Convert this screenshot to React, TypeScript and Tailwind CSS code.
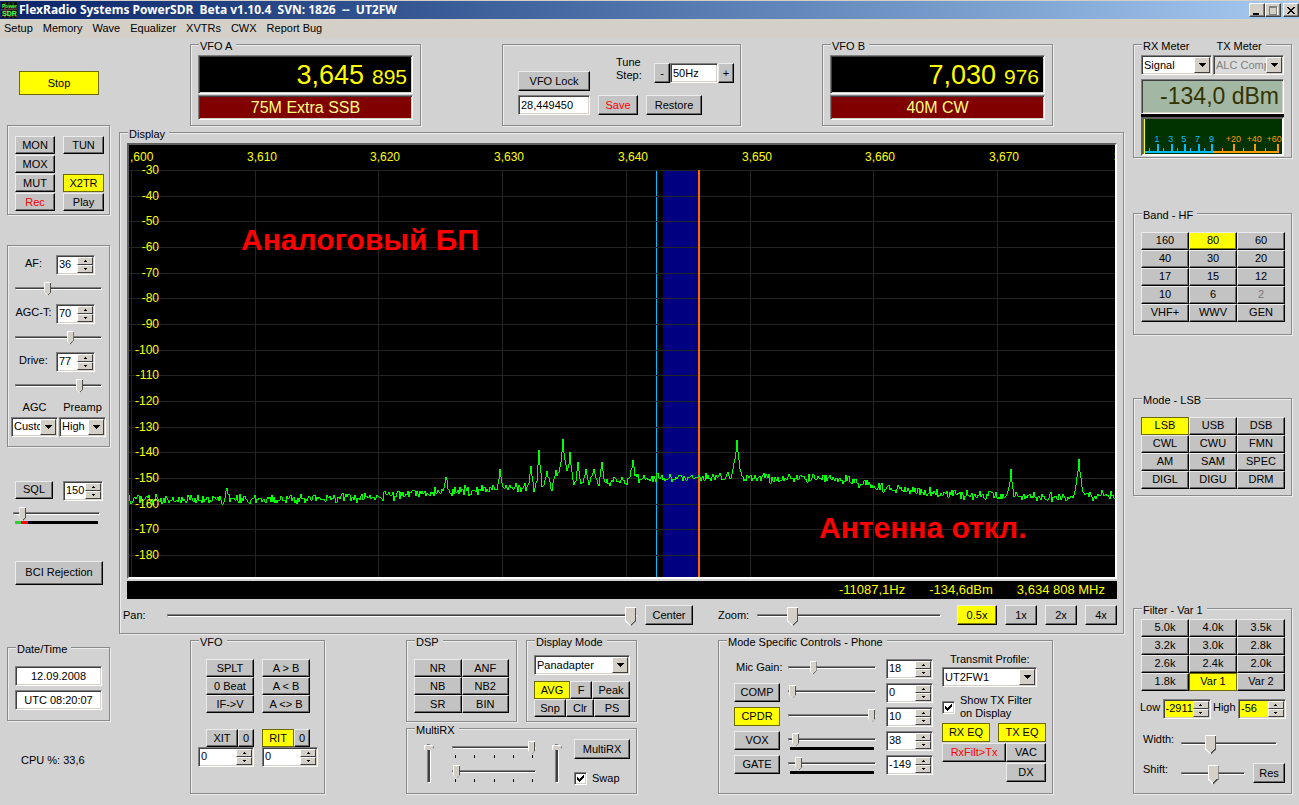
import React from 'react';
import clsx from 'clsx';

type GroupProps = {
  title?: React.ReactNode;
  className?: string;
  children: React.ReactNode;
};

function Group({ title, className, children }: GroupProps) {
  return (
    <fieldset
      className={clsx(
        'relative min-w-0 border border-[#8a8a8a] shadow-[inset_1px_1px_0_#ececec,1px_1px_0_#ececec]',
        className
      )}
    >
      {title && (
        <legend className="absolute -top-[5px] left-2 bg-[#d2d2d2] pl-px pr-1 leading-[13px] whitespace-nowrap">
          {title}
        </legend>
      )}
      {children}
    </fieldset>
  );
}

type BtnProps = {
  on?: boolean;
  raised?: boolean;
  className?: string;
  disabled?: boolean;
  children: React.ReactNode;
};

function Btn({ on, raised, className, disabled, children }: BtnProps) {
  return (
    <button
      type="button"
      disabled={disabled}
      className={clsx(
        'flex items-center justify-center overflow-hidden border whitespace-nowrap leading-none',
        on && !raised && 'border-[#6b6b00] bg-[#ffff00]',
        on && raised && 'border-t-[#ececec] border-l-[#ececec] border-r-black border-b-black bg-[#ffff00] shadow-[inset_-1px_-1px_0_#808000]',
        !on && 'border-t-[#ececec] border-l-[#ececec] border-r-black border-b-black bg-[#c3c3c3] shadow-[inset_-1px_-1px_0_#6a6a6a]',
        disabled && 'text-[#777]',
        className
      )}
    >
      {children}
    </button>
  );
}

const sunken =
  'border border-t-[#808080] border-l-[#808080] border-r-white border-b-white shadow-[inset_1px_1px_0_#404040,inset_-1px_-1px_0_#d4d0c8]';

function Spinner({ label, value, yellow, className }: { label: string; value: string; yellow?: boolean; className?: string }) {
  return (
    <div className={clsx(sunken, 'flex h-5 p-px', yellow ? 'bg-[#ffff00]' : 'bg-white', className)}>
      <input aria-label={label} defaultValue={value} className="h-full w-0 min-w-0 flex-1 bg-transparent pl-px pb-[2px] outline-none" />
      <div className="flex w-4 flex-col bg-[#d4d0c8]">
        <button
          type="button"
          aria-label={label + ' up'}
          className="flex flex-1 items-center justify-center border border-t-white border-l-white border-r-[#404040] border-b-[#404040]"
        >
          <svg width="3" height="2" viewBox="0 0 3 2" shapeRendering="crispEdges">
            <path d="M1 0h1v1h1v1H0V1h1z" />
          </svg>
        </button>
        <button
          type="button"
          aria-label={label + ' down'}
          className="flex flex-1 items-center justify-center border border-t-white border-l-white border-r-[#404040] border-b-[#404040]"
        >
          <svg width="3" height="2" viewBox="0 0 3 2" shapeRendering="crispEdges">
            <path d="M0 0h3v1H2v1H1V1H0z" />
          </svg>
        </button>
      </div>
    </div>
  );
}

function Combo({ id, label, value, muted, className }: { id?: string; label?: string; value: string; muted?: boolean; className?: string }) {
  return (
    <div className={clsx('relative h-5', className)}>
      <select
        id={id}
        aria-label={label}
        defaultValue={value}
        className={clsx(
          sunken,
          'h-full w-full appearance-none overflow-hidden rounded-none pr-4 pl-[2px] leading-none outline-none',
          muted ? 'bg-[#dcdcdc] text-[#808080]' : 'bg-white'
        )}
      >
        <option>{value}</option>
      </select>
      <span className="pointer-events-none absolute top-[2px] right-[2px] bottom-[2px] flex w-4 items-center justify-center border border-t-white border-l-white border-r-[#404040] border-b-[#404040] bg-[#d4d0c8]">
        <svg width="7" height="4" viewBox="0 0 7 4" shapeRendering="crispEdges">
          <path d="M0 0h7v1H6v1H5v1H4v1H3V3H2V2H1V1H0z" />
        </svg>
      </span>
    </div>
  );
}

const track =
  'block appearance-none bg-transparent [&::-webkit-slider-runnable-track]:box-border [&::-webkit-slider-runnable-track]:border [&::-webkit-slider-runnable-track]:border-t-[#808080] [&::-webkit-slider-runnable-track]:border-l-[#808080] [&::-webkit-slider-runnable-track]:border-r-white [&::-webkit-slider-runnable-track]:border-b-white [&::-webkit-slider-runnable-track]:bg-[#404040]';

const thumb =
  '[&::-webkit-slider-thumb]:appearance-none [&::-webkit-slider-thumb]:bg-[#d4d0c8] [&::-webkit-slider-thumb]:shadow-[inset_1px_1px_0_#fff,inset_-1px_0_0_#505050]';

// pointed lower end: light left edge, dark right edge
const tip =
  '[&::-webkit-slider-thumb]:[clip-path:polygon(0_0,100%_0,100%_72%,50%_100%,0_72%)] [&::-webkit-slider-thumb]:bg-[linear-gradient(to_bottom_right,transparent_30%,#505050_30%),linear-gradient(to_bottom_left,transparent_35%,#ffffff_35%)] [&::-webkit-slider-thumb]:bg-[size:50%_28%] [&::-webkit-slider-thumb]:bg-[position:right_bottom,left_bottom] [&::-webkit-slider-thumb]:bg-no-repeat';

function Slider({ label, value, big, className }: { label: string; value: number; big?: boolean; className?: string }) {
  return (
    <input
      type="range"
      aria-label={label}
      defaultValue={value}
      className={clsx(
        track,
        thumb,
        tip,
        '[&::-webkit-slider-runnable-track]:h-[3px]',
        big
          ? 'h-5 [&::-webkit-slider-thumb]:-mt-2 [&::-webkit-slider-thumb]:h-5 [&::-webkit-slider-thumb]:w-[11px]'
          : 'h-[14px] [&::-webkit-slider-thumb]:-mt-[6px] [&::-webkit-slider-thumb]:h-[14px] [&::-webkit-slider-thumb]:w-[7px]',
        className
      )}
    />
  );
}

function VSlider({ label }: { label: string }) {
  return (
    <input
      type="range"
      aria-label={label}
      defaultValue={100}
      className={clsx(
        track,
        thumb,
        'h-[39px] w-[10px] [direction:rtl] [writing-mode:vertical-lr] [&::-webkit-slider-runnable-track]:w-[4px] [&::-webkit-slider-thumb]:-ml-[4px] [&::-webkit-slider-thumb]:h-[5px] [&::-webkit-slider-thumb]:w-[10px] [&::-webkit-slider-thumb]:[clip-path:polygon(0_0,80%_0,100%_50%,80%_100%,0_100%)]'
      )}
    />
  );
}

function Ticks() {
  return (
    <div className="flex h-[3px] justify-between px-[3px]">
      {[0, 1, 2, 3, 4].map((t) => (
        <span key={t} className="w-px bg-black" />
      ))}
    </div>
  );
}

function Check({ label, className }: { label: React.ReactNode; className?: string }) {
  return (
    <label className={clsx('flex items-center gap-[5px] leading-[13px]', className)}>
      <span className="relative h-[13px] w-[13px]">
        <input type="checkbox" defaultChecked className={clsx(sunken, 'peer block h-[13px] w-[13px] appearance-none bg-white')} />
        <svg className="pointer-events-none absolute top-[3px] left-[3px] hidden peer-checked:block" width="7" height="7" viewBox="0 0 7 7" shapeRendering="crispEdges">
          <path d="M0 2h1v1h1v1h1V3h1V2h1V1h1V0h1v3H6v1H5v1H4v1H3v1H2V6H1V5H0z" />
        </svg>
      </span>
      <span>{label}</span>
    </label>
  );
}

function Vfo({ name, mhz, hz, band }: { name: string; mhz: string; hz: string; band: string }) {
  return (
    <Group title={name} className="w-[231px] px-[7px] pt-[10px] pb-[5px]">
      <div className={clsx(sunken, 'flex h-[39px] items-baseline justify-end gap-2 bg-black px-[5px] text-[#ffff00]')}>
        <span className="text-[27px] leading-[38px]">{mhz}</span>
        <span className="text-[21px]">{hz}</span>
      </div>
      <div className={clsx(sunken, 'mt-px flex h-[25px] items-center justify-center bg-[#800000] text-[16px] text-[#ffff80]')}>{band}</div>
    </Group>
  );
}

function ButtonGrid({ items, active, raised, off }: { items: string[]; active: string; raised?: boolean; off?: string }) {
  return (
    <div className="grid grid-cols-3">
      {items.map((item) => (
        <Btn key={item} on={item === active} raised={raised} disabled={item === off} className="h-[18px]">
          {item}
        </Btn>
      ))}
    </div>
  );
}

// noise floor and carriers, [x, y] inside the panadapter
const floor = [
  [0, 355], [110, 355], [170, 354], [230, 352], [270, 350], [320, 346], [370, 344], [400, 342], [430, 340], [470, 338],
  [500, 335], [530, 333], [600, 332], [650, 334], [710, 333], [740, 341], [770, 345], [820, 349], [870, 350], [920, 352], [986, 350],
];
const peaks = [
  [98, 343, 2], [317, 332, 3], [371, 324, 2], [402, 321, 2], [410, 305, 2], [418, 326, 3], [427, 325, 3], [434, 294, 5], [441, 307, 3],
  [449, 317, 2], [457, 324, 2], [465, 324, 3], [473, 317, 2], [504, 315, 3], [608, 295, 4], [882, 324, 2], [950, 314, 4],
];

function spectrum() {
  let seed = 1826;
  const pts: string[] = [];
  for (let x = 0; x <= 986; x++) {
    let i = 0;
    while (i < floor.length - 2 && x > floor[i + 1][0]) i++;
    const [x0, y0] = floor[i];
    const [x1, y1] = floor[i + 1];
    seed = (seed * 16807) % 2147483647;
    const n = seed / 2147483647 - 0.5;
    seed = (seed * 16807) % 2147483647;
    const m = seed / 2147483647 - 0.5;
    let y = y0 + ((y1 - y0) * (x - x0)) / (x1 - x0) + (n + m) * 6;
    peaks.forEach(([px, py, w]) => {
      const d = Math.abs(x - px) / (w + 1);
      if (d < 1) y = Math.min(y, py + (y - py) * Math.pow(d, 0.7));
    });
    pts.push(x + ',' + Math.round(y));
  }
  return pts.join(' ');
}

const gridX = [2, 126, 249, 373, 497, 621, 744, 868];
const gridY = [25, 51, 76, 102, 128, 153, 179, 205, 230, 256, 282, 307, 333, 359, 384, 410];
const freqs = ['3,610', '3,620', '3,630', '3,640', '3,650', '3,660', '3,670', '3,680'];

function Panadapter() {
  return (
    <svg className="block h-auto w-full" viewBox="0 0 986 432" shapeRendering="crispEdges">
      <rect width="986" height="432" fill="#000" />
      <rect x="527" y="26" width="1" height="406" fill="#00bfff" />
      <rect x="534" y="26" width="35" height="406" fill="#000080" />
      {gridX.map((x) => (
        <rect key={x} x={x} y="25" width="1" height="407" fill="#242424" />
      ))}
      {gridY.map((y) => (
        <rect key={y} x="0" y={y} width="986" height="1" fill="#242424" />
      ))}
      <rect x="569" y="25" width="2" height="407" fill="#ff6600" />
      <polyline points={spectrum()} fill="none" stroke="#00ff00" strokeWidth="1" />
      <g fill="#ffff00" fontSize="12">
        <text x="1" y="16">,600</text>
        {freqs.map((f, i) => (
          <text key={f} x={i === 7 ? 985 : gridX[i + 1] - 8} y="16">{f}</text>
        ))}
        {gridY.map((y, i) => (
          <text key={y} x="30" y={y + 4} textAnchor="end">{-30 - i * 10}</text>
        ))}
      </g>
      <g fill="#ff0000" fontWeight="bold" fontSize="30">
        <text x="112" y="105">Аналоговый БП</text>
        <text x="690" y="393">Антенна откл.</text>
      </g>
    </svg>
  );
}

function SMeter() {
  return (
    <svg className="block h-auto w-full" viewBox="0 0 140 35" shapeRendering="crispEdges">
      <rect width="140" height="35" fill="#003300" />
      <rect x="0" width="1" height="35" fill="#808000" />
      <rect x="1" width="1" height="35" fill="#ffff00" />
      <g fill="#00bfff">
        <rect x="2" y="32" width="68" height="2" />
        {[14, 28, 41, 55, 68].map((x) => <rect key={x} x={x} y="25" width="2" height="7" />)}
        {[6, 20, 34, 47, 61].map((x) => <rect key={x} x={x} y="29" width="1" height="3" />)}
      </g>
      <g fill="#ff9900">
        <rect x="70" y="32" width="67" height="2" />
        {[91, 112, 135].map((x) => <rect key={x} x={x} y="25" width="2" height="7" />)}
        {[80, 101, 123].map((x) => <rect key={x} x={x} y="29" width="1" height="3" />)}
      </g>
      <g fontSize="9" textAnchor="middle">
        <g fill="#00bfff">
          <text x="14" y="23">1</text>
          <text x="28" y="23">3</text>
          <text x="41" y="23">5</text>
          <text x="55" y="23">7</text>
          <text x="69" y="23">9</text>
        </g>
        <g fill="#ff9900">
          <text x="91" y="23">+20</text>
          <text x="112" y="23">+40</text>
          <text x="132" y="23">+60</text>
        </g>
      </g>
    </svg>
  );
}

function WinButton({ label, children, className }: { label: string; children: React.ReactNode; className?: string }) {
  return (
    <button
      type="button"
      aria-label={label}
      className={clsx(
        'flex h-[14px] w-4 items-center justify-center border border-t-white border-l-white border-r-[#404040] border-b-[#404040] bg-[#d4d0c8] shadow-[inset_-1px_-1px_0_#808080]',
        className
      )}
    >
      <svg width="10" height="9" viewBox="0 0 10 9" shapeRendering="crispEdges">
        {children}
      </svg>
    </button>
  );
}

function TitleBar() {
  return (
    <header className="flex h-[18px] items-center bg-linear-to-r from-[#0a246a] to-[#a6caf0] text-white">
      <svg width="16" height="16" viewBox="0 0 16 16" className="ml-px">
        <rect width="16" height="16" fill="#0a0f0a" />
        <path d="M0 7.500h16M8 0v16M12 0v16M4 0v16" stroke="#1c5c1c" strokeWidth="1" />
        <path d="M0 8h3l1-3 2 6 1-4h9M0 15l2-2 2 2 2-3 3 3 3-2 4 2" fill="none" stroke="#8a2848" strokeWidth="1" />
        <text x="1" y="6" fontSize="5" fontWeight="bold" fill="#4dff4d">Power</text>
        <text x="1" y="14" fontSize="7" fontWeight="bold" fill="#4dff4d">SDR</text>
      </svg>
      <h1 className="ml-[2px] font-['Noto_Sans',sans-serif] text-[12px] leading-[18px] font-bold whitespace-pre">
        {'FlexRadio Systems PowerSDR  Beta v1.10.4  SVN: 1826  --  UT2FW'}
      </h1>
      <div className="ml-auto flex text-black">
        <WinButton label="Minimize">
          <rect x="1" y="7" width="6" height="2" />
        </WinButton>
        <WinButton label="Maximize">
          <path d="M1 0h8v9H1zM2 2v6h6V2z" fill="#808080" fillRule="evenodd" />
          <path d="M9 1h1v8H9z" fill="#fff" />
        </WinButton>
        <WinButton label="Close" className="ml-[2px]">
          <path d="M1 1h2v1h1v1h2V2h1V1h2v1H8v1H7v1H6v1h1v1h1v1h1v1H7V7H6V6H4v1H3v1H1V7h1V6h1V5h1V4H3V3H2V2H1z" />
        </WinButton>
      </div>
    </header>
  );
}

const menu = ['Setup', 'Memory', 'Wave', 'Equalizer', 'XVTRs', 'CWX', 'Report Bug'];

const levels = [
  { label: 'AF:', value: '36', pos: 36 },
  { label: 'AGC-T:', value: '70', pos: 65 },
  { label: 'Drive:', value: '77', pos: 77 },
];

function LeftColumn() {
  return (
    <aside className="flex w-[103px] flex-col">
      <Btn on className="mx-3 mt-[27px] h-6 w-20">Stop</Btn>

      <Group className="mt-[30px] px-[7px] pt-[10px] pb-[3px]">
        <div className="grid grid-cols-[40px_41px] gap-x-2 gap-y-px">
          <Btn className="h-[18px]">MON</Btn>
          <Btn className="h-[18px]">TUN</Btn>
          <Btn className="h-[18px]">MOX</Btn>
          <Btn className="col-start-1 h-[18px]">MUT</Btn>
          <Btn on className="h-[18px]">X2TR</Btn>
          <Btn className="h-[18px] text-[#ff0000]">Rec</Btn>
          <Btn className="h-[18px]">Play</Btn>
        </div>
      </Group>

      <Group className="mt-[30px] px-[3px] pt-[9px] pb-[9px]">
        {levels.map((l) => (
          <div key={l.label} className="mb-2">
            <div className="flex items-center justify-between pr-[11px]">
              <span className="w-[46px] pb-1 text-center">{l.label}</span>
              <Spinner label={l.label} value={l.value} className="w-10" />
            </div>
            <Slider label={l.label + ' level'} value={l.pos} className="mt-[6px] ml-1 w-[87px]" />
          </div>
        ))}
        <div className="grid grid-cols-2 gap-x-px gap-y-1 text-center leading-3">
          <label htmlFor="agc">AGC</label>
          <label htmlFor="preamp">Preamp</label>
          <Combo id="agc" value="Custom" />
          <Combo id="preamp" value="High" />
        </div>
      </Group>

      <div className="mt-[34px] ml-2 flex gap-[10px]">
        <Btn className="h-[18px] w-[38px]">SQL</Btn>
        <Spinner label="Squelch" value="150" className="w-10" />
      </div>
      <Slider label="Squelch level" value={7} className="mt-[6px] ml-[6px] w-[87px]" />
      <div className="ml-2 flex h-[3px] w-[83px] bg-black">
        <span className="w-[6px] bg-[#32cd32]" />
        <span className="w-[7px] bg-[#ff0000]" />
      </div>

      <Btn className="mt-[37px] ml-2 h-6 w-[88px]">BCI Rejection</Btn>

      <Group title="Date/Time" className="mt-[62px] flex flex-col gap-1 px-[7px] pt-[18px] pb-[10px]">
        <input aria-label="Date" readOnly defaultValue="12.09.2008" className={clsx(sunken, 'h-5 w-full bg-white text-center')} />
        <input aria-label="Time" readOnly defaultValue="UTC 08:20:07" className={clsx(sunken, 'h-5 w-full bg-white text-center')} />
      </Group>
      <p className="mt-[33px] ml-[14px] leading-3">CPU %: 33,6</p>
    </aside>
  );
}

function TuneGroup() {
  return (
    <Group className="w-[239px] pt-[11px] pr-[6px] pb-[10px] pl-[15px]">
      <div className="flex items-start">
        <Btn className="h-5 w-[72px] self-end">VFO Lock</Btn>
        <label htmlFor="step" className="mb-[9px] ml-[26px] w-[38px] leading-[13px]">
          Tune
          <br />
          Step:
        </label>
        <div className="mt-[7px] flex">
          <Btn className="h-5 w-4">-</Btn>
          <input id="step" defaultValue="50Hz" className={clsx(sunken, 'h-5 w-12 bg-white pl-[2px]')} />
          <Btn className="h-5 w-4">+</Btn>
        </div>
      </div>
      <div className="mt-1 flex gap-2">
        <input aria-label="Stored frequency" defaultValue="28,449450" className={clsx(sunken, 'h-5 w-[72px] bg-white pl-[2px]')} />
        <Btn className="h-5 w-10 text-[#ff0000]">Save</Btn>
        <Btn className="h-5 w-14">Restore</Btn>
      </div>
    </Group>
  );
}

function DisplayGroup() {
  return (
    <Group title="Display" className="mt-[6px] pt-[10px] pr-[6px] pb-2 pl-[7px]">
      <div className="border-2 border-t-[#606060] border-l-[#606060] border-r-white border-b-white">
        <Panadapter />
      </div>
      <div className="mt-[2px] flex h-[18px] items-center justify-end gap-6 bg-black pr-3 text-[13px] text-[#ffff00]">
        <span>-11087,1Hz</span>
        <span>-134,6dBm</span>
        <span>3,634 808 MHz</span>
      </div>
      <div className="-ml-1 mt-[6px] flex items-center">
        <span className="w-11">Pan:</span>
        <Slider big label="Pan" value={100} className="min-w-0 flex-1" />
        <Btn className="ml-2 h-5 w-12">Center</Btn>
        <span className="ml-[25px] w-[39px]">Zoom:</span>
        <Slider big label="Zoom" value={17} className="w-[184px]" />
        <Btn on raised className="ml-4 h-5 w-10">0.5x</Btn>
        <Btn className="ml-2 h-5 w-8">1x</Btn>
        <Btn className="ml-2 h-5 w-8">2x</Btn>
        <Btn className="ml-2 h-5 w-8">4x</Btn>
      </div>
    </Group>
  );
}

function VfoControls() {
  return (
    <Group title="VFO" className="flex w-[135px] gap-2 pt-[18px] pl-[7px]">
      <div className="flex w-14 flex-col items-end">
        <Btn className="h-[18px] w-12">SPLT</Btn>
        <Btn className="h-[18px] w-12">0 Beat</Btn>
        <Btn className="h-[18px] w-12">IF-&gt;V</Btn>
        <div className="mt-4 flex">
          <Btn className="h-[18px] w-8">XIT</Btn>
          <Btn className="h-[18px] w-4">0</Btn>
        </div>
        <Spinner label="XIT offset" value="0" className="w-14" />
      </div>
      <div className="flex w-14 flex-col items-start">
        <Btn className="h-[18px] w-12">A &gt; B</Btn>
        <Btn className="h-[18px] w-12">A &lt; B</Btn>
        <Btn className="h-[18px] w-12">A &lt;&gt; B</Btn>
        <div className="mt-4 flex">
          <Btn on className="h-[18px] w-8">RIT</Btn>
          <Btn className="h-[18px] w-4">0</Btn>
        </div>
        <Spinner label="RIT offset" value="0" className="w-14" />
      </div>
    </Group>
  );
}

function MiddleControls() {
  return (
    <div className="flex w-[231px] flex-col gap-[6px]">
      <div className="flex justify-between">
        <Group title="DSP" className="w-[111px] px-[7px] pt-[18px] pb-2">
          <div className="grid grid-cols-2">
            {['NR', 'ANF', 'NB', 'NB2', 'SR', 'BIN'].map((b) => (
              <Btn key={b} className="h-[18px]">{b}</Btn>
            ))}
          </div>
        </Group>
        <Group title="Display Mode" className="w-[111px] pt-[14px] pr-[6px] pb-1 pl-[7px]">
          <Combo label="Display mode" value="Panadapter" />
          <div className="mt-[6px] flex">
            <Btn on className="h-[18px] w-9">AVG</Btn>
            <Btn className="h-[18px] w-[22px]">F</Btn>
            <Btn className="h-[18px] flex-1">Peak</Btn>
          </div>
          <div className="flex">
            <Btn className="h-[18px] w-8">Snp</Btn>
            <Btn className="h-[18px] w-7">Clr</Btn>
            <Btn className="h-[18px] flex-1">PS</Btn>
          </div>
        </Group>
      </div>
      <Group title="MultiRX" className="flex flex-1 pt-[10px] pl-[17px]">
        <div className="pt-[5px]">
          <VSlider label="RX1 gain" />
        </div>
        <div className="ml-[18px] w-[84px] pt-px">
          <Slider label="RX1 pan" value={100} className="w-full" />
          <div className="mt-px">
            <Ticks />
          </div>
          <div className="mt-[6px]">
            <Slider label="RX2 pan" value={0} className="w-full" />
          </div>
          <div className="mt-px">
            <Ticks />
          </div>
        </div>
        <div className="ml-4 pt-[5px]">
          <VSlider label="RX2 gain" />
        </div>
        <div className="ml-3">
          <Btn className="h-5 w-14">MultiRX</Btn>
          <Check label="Swap" className="mt-[13px]" />
        </div>
      </Group>
    </div>
  );
}

const phone = [
  { label: 'Mic Gain:', value: '18', pos: 26 },
  { label: 'COMP', value: '0', pos: 0 },
  { label: 'CPDR', value: '10', pos: 100 },
  { label: 'VOX', value: '38', pos: 4, bar: true },
  { label: 'GATE', value: '-149', pos: 8, bar: true },
];

function PhoneControls() {
  return (
    <Group title="Mode Specific Controls - Phone" className="flex w-[335px] pb-[11px] pl-[15px]">
      <div className="w-[199px] pt-[18px]">
        {phone.map((p, i) => (
          <div key={p.label} className="flex h-6 items-start">
            {i === 0 ? (
              <span className="w-[46px] pt-[2px] pl-[2px] leading-3 whitespace-nowrap">{p.label}</span>
            ) : (
              <Btn on={p.label === 'CPDR'} className="h-[19px] w-[46px]">{p.label}</Btn>
            )}
            <div className="ml-2 w-[88px] pt-px">
              <Slider label={p.label + ' level'} value={p.pos} className="w-full" />
              {p.bar && <div className="mx-[2px] mt-px h-[3px] bg-black" />}
            </div>
            <Spinner label={p.label} value={p.value} className="ml-[10px] w-[47px]" />
          </div>
        ))}
      </div>
      <div className="ml-[9px] w-[104px] pt-3">
        <label htmlFor="profile" className="block pl-2 leading-[13px]">Transmit Profile:</label>
        <Combo id="profile" value="UT2FW1" className="mt-px w-[95px]" />
        <Check
          label={
            <>
              Show TX Filter
              <br />
              on Display
            </>
          }
          className="mt-[7px]"
        />
        <div className="mt-[3px] flex justify-between">
          <Btn on className="h-[19px] w-12">RX EQ</Btn>
          <Btn on className="h-[19px] w-12">TX EQ</Btn>
        </div>
        <div className="mt-px flex">
          <Btn className="h-[19px] w-16 text-[#ff0000]">RxFilt&gt;Tx</Btn>
          <Btn className="h-[19px] w-10">VAC</Btn>
        </div>
        <Btn className="mt-px ml-auto h-[19px] w-10">DX</Btn>
      </div>
    </Group>
  );
}

function RightColumn() {
  return (
    <aside className="flex w-[159px] flex-col">
      <Group
        title={
          <span className="flex gap-[27px]">
            <label htmlFor="rxmeter">RX Meter</label>
            <label htmlFor="txmeter">TX Meter</label>
          </span>
        }
        className="px-[7px] pt-[10px] pb-px"
      >
        <div className="grid grid-cols-2 gap-px">
          <Combo id="rxmeter" value="Signal" />
          <Combo id="txmeter" value="ALC Comp" muted />
        </div>
        <div className={clsx(sunken, 'mt-1 flex h-[35px] items-center justify-end bg-[#a2b8a5] pr-1 text-[23px] text-[#333300]')}>
          -134,0 dBm
        </div>
        <div className="h-[3px] bg-black" />
        <div className="border-2 border-t-[#606060] border-l-[#606060] border-r-white border-b-white">
          <SMeter />
        </div>
      </Group>

      <Group title="Band - HF" className="mt-[55px] pt-[18px] pr-[6px] pb-3 pl-[7px]">
        <ButtonGrid
          items={['160', '80', '60', '40', '30', '20', '17', '15', '12', '10', '6', '2', 'VHF+', 'WWV', 'GEN']}
          active="80"
          raised
          off="2"
        />
      </Group>

      <Group title="Mode - LSB" className="mt-[63px] pt-[18px] pr-[6px] pb-[6px] pl-[7px]">
        <ButtonGrid
          items={['LSB', 'USB', 'DSB', 'CWL', 'CWU', 'FMN', 'AM', 'SAM', 'SPEC', 'DIGL', 'DIGU', 'DRM']}
          active="LSB"
        />
      </Group>

      <Group title="Filter - Var 1" className="mt-[112px] pt-[10px] pr-[6px] pb-[10px] pl-[7px]">
        <ButtonGrid
          items={['5.0k', '4.0k', '3.5k', '3.2k', '3.0k', '2.8k', '2.6k', '2.4k', '2.0k', '1.8k', 'Var 1', 'Var 2']}
          active="Var 1"
        />
        <div className="-mx-px mt-2 flex items-center justify-between">
          <span className="pb-1">Low</span>
          <Spinner label="Filter low" value="-2911" yellow className="w-12" />
          <span className="pb-1">High</span>
          <Spinner label="Filter high" value="-56" yellow className="w-12" />
        </div>
        <div className="mt-[14px] flex">
          <span className="w-10 pl-[2px] leading-3">Width:</span>
          <Slider big label="Width" value={28} className="w-[96px]" />
        </div>
        <div className="mt-[10px] flex">
          <span className="w-10 pl-[2px] leading-3">Shift:</span>
          <Slider big label="Shift" value={50} className="w-16" />
          <Btn className="ml-auto h-5 w-8">Res</Btn>
        </div>
      </Group>
    </aside>
  );
}

export default function App() {
  return (
    <div className="min-h-screen min-w-[1240px] overflow-hidden bg-[#d2d2d2] font-['Liberation_Sans',Arial,sans-serif] text-[11px] text-black">
      <div className="bg-[#d4d0c8] pt-px">
        <TitleBar />
        <nav className="flex h-[19px] items-center gap-[10px] px-1">
          {menu.map((m) => (
            <button key={m} type="button">{m}</button>
          ))}
        </nav>
      </div>
      <main className="flex gap-[9px] px-[7px] pt-[6px]">
        <LeftColumn />
        <div className="min-w-0 flex-1">
          <div className="flex justify-between px-[71px]">
            <Vfo name="VFO A" mhz="3,645" hz="895" band="75M Extra SSB" />
            <TuneGroup />
            <Vfo name="VFO B" mhz="7,030" hz="976" band="40M CW" />
          </div>
          <DisplayGroup />
          <div className="mt-[6px] flex justify-between px-[71px]">
            <VfoControls />
            <MiddleControls />
            <PhoneControls />
          </div>
        </div>
        <RightColumn />
      </main>
    </div>
  );
}
